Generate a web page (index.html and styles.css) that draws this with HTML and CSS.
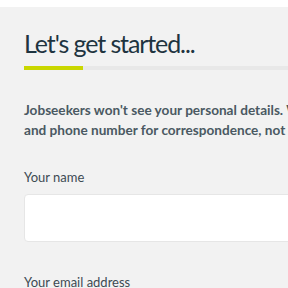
FILE: index.html
```html
<!DOCTYPE html>
<html>
<head>
    <title>Let's get started</title>
    <link rel="stylesheet" href="styles.css">
</head>
<body>
    <div class="top-strip"></div>

    <div class="page">
        <h1 class="title">Let's get started...</h1>
        <div class="title-rule">
            <span class="title-rule-accent"></span>
        </div>

        <p class="intro">Jobseekers won't see your personal details. We only use your email address<br>and phone number for correspondence, not for advertising.</p>

        <div class="field">
            <label class="field-label" for="name">Your name</label>
            <input class="field-input" type="text" id="name">
        </div>

        <div class="field">
            <label class="field-label" for="email">Your email address</label>
            <input class="field-input" type="email" id="email">
        </div>
    </div>
</body>
</html>
```

FILE: styles.css
```css
html,
body {
    margin: 0;
    overflow: hidden;
}

body {
    background-color: #f2f2f2;
    font-family: Lato, sans-serif;
    color: #3d4a52;
}

.top-strip {
    height: 7px;
    background-color: #fff;
}

.page {
    width: 620px;
    padding: 19px 0 0 24px;
}

.title {
    margin: 0;
    font-weight: 400;
    font-size: 25px;
    letter-spacing: -1.1px;
    line-height: 34px;
    color: #1e3440;
}

.title-rule {
    margin-top: 6px;
    height: 4px;
    background-color: #e8e8e8;
}

.title-rule-accent {
    display: block;
    width: 59px;
    height: 4px;
    background-color: #c9d700;
}

.intro {
    margin: 30px 0 0;
    font-size: 13.6px;
    font-weight: 700;
    line-height: 20px;
    color: #4a5962;
}

.field {
    margin-top: 28px;
}

.field-label {
    display: block;
    font-size: 13px;
    line-height: 18px;
    color: #3d4a52;
}

.field-input {
    display: block;
    box-sizing: border-box;
    margin-top: 8px;
    width: 100%;
    height: 48px;
    border: 1px solid #e6e6e6;
    border-radius: 4px;
    background-color: #fff;
}

.field + .field {
    margin-top: 31px;
}
```
